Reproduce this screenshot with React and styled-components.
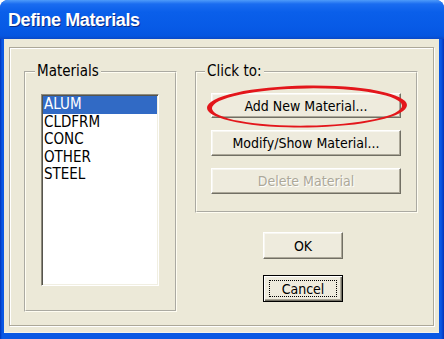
import React from 'react';
import styled, { createGlobalStyle } from 'styled-components';

const Global = createGlobalStyle`
  html, body { margin: 0; padding: 0; background: #ffffff; }
  body { width: 444px; height: 339px; overflow: hidden; }
  #root { width: 444px; height: 339px; }
`;

const UI = `"DejaVu Sans Condensed", "DejaVu Sans", sans-serif`;

const Window = styled.div`
  width: 444px;
  height: 339px;
  box-sizing: border-box;
  display: flex;
  flex-direction: column;
  border-radius: 8px 8px 0 0;
  overflow: hidden;
  background: #0A50DA;
`;

const TitleBar = styled.div`
  flex: none;
  height: 39px;
  box-sizing: border-box;
  display: flex;
  align-items: center;
  padding: 2px 0 0 8px;
  background: linear-gradient(
    to bottom,
    #4E9BFA 0px,
    #1A6CF0 4px,
    #0A5FEA 12px,
    #075AE6 28px,
    #0556E0 36px,
    #0A48C6 39px
  );
`;

const Title = styled.span`
  font-family: "Liberation Sans", Arial, sans-serif;
  font-weight: bold;
  font-size: 18px;
  letter-spacing: -0.4px;
  color: #ffffff;
  text-shadow: 1px 1px 0 #0B2C86;
`;

const Frame = styled.div`
  flex: 1;
  display: flex;
  padding: 0 5px 6px 4px;
  background: linear-gradient(to right, #0033B8 0px, #0A58E4 2px, #0A58E4 calc(100% - 3px), #0033B8 100%);
`;

const Client = styled.div`
  flex: 1;
  display: flex;
  background: #ECE9D8;
  padding: 8px 5px 7px 5px;
  box-shadow: inset 0 -1px 0 #F4F2EA;
`;

const Panel = styled.div`
  flex: 1;
  display: flex;
  align-items: flex-start;
  gap: 18px;
  padding: 15px 0 0 14px;
  border: 1px solid #ACA899;
  box-shadow: inset 1px 1px 0 #ffffff, 1px 1px 0 #ffffff;
`;

const Group = styled.fieldset`
  margin: 0;
  padding: 0;
  min-width: 0;
  width: ${(p) => p.$w}px;
  height: ${(p) => p.$h}px;
  box-sizing: border-box;
  border: 2px groove #FFFDF2;
`;

const GroupBody = styled.div`
  display: flex;
  flex-direction: column;
  align-items: flex-start;
  padding: ${(p) => p.$pad};
`;

const Legend = styled.legend`
  margin-left: ${(p) => p.$ml}px;
  padding: 0 2px;
  font-family: ${UI};
  font-size: 15px;
  line-height: 17px;
  color: #000;
`;

const List = styled.ul`
  list-style: none;
  margin: 0;
  padding: 1px;
  width: 118px;
  height: 192px;
  box-sizing: border-box;
  background: #ffffff;
  border: 1px solid;
  border-color: #8E8B7D #FFFFFF #FFFFFF #8E8B7D;
  box-shadow: inset 1px 1px 0 #55544C, inset -1px -1px 0 #F1EFE2;
`;

const Item = styled.li`
  height: 17.5px;
  line-height: 17.5px;
  padding-left: 1px;
  font-family: ${UI};
  font-size: 15px;
  color: ${(p) => (p.$selected ? '#ffffff' : '#000000')};
  background: ${(p) => (p.$selected ? '#316AC5' : 'transparent')};
`;

const RightColumn = styled.div`
  display: flex;
  flex-direction: column;
  align-items: flex-start;
`;

const ButtonStack = styled.div`
  display: flex;
  flex-direction: column;
  gap: ${(p) => p.$gap}px;
  margin: ${(p) => p.$m};
`;

const Marked = styled.div`
  position: relative;
`;

const Button = styled.button`
  position: relative;
  width: ${(p) => p.$w}px;
  height: ${(p) => p.$h}px;
  margin: 0;
  padding: 0;
  box-sizing: border-box;
  font-family: ${UI};
  font-size: 14px;
  color: ${(p) => (p.disabled ? '#ACA899' : '#000000')};
  text-shadow: ${(p) => (p.disabled ? '1px 1px 0 #ffffff' : 'none')};
  background: #EEEBDD;
  border: 1px solid;
  border-color: ${(p) => (p.$default ? '#000000' : '#FFFFFF #716F64 #716F64 #FFFFFF')};
  box-shadow: ${(p) =>
    p.$default
      ? 'inset 1px 1px 0 #ffffff, inset -1px -1px 0 #716F64, inset -2px -2px 0 #ACA899'
      : 'inset -1px -1px 0 #ACA899, inset 1px 1px 0 #F7F6F0'};
  &::after {
    content: '';
    display: ${(p) => (p.$default ? 'block' : 'none')};
    position: absolute;
    left: 5px;
    right: 5px;
    top: 4px;
    bottom: 4px;
    border: 1px dotted #000000;
  }
`;

const Highlight = styled.svg`
  position: absolute;
  left: -5px;
  top: -8px;
  width: 202px;
  height: 43px;
  pointer-events: none;
  overflow: visible;
`;

const materials = ['ALUM', 'CLDFRM', 'CONC', 'OTHER', 'STEEL'];

export default function App() {
  return (
    <>
      <Global />
      <Window>
        <TitleBar>
          <Title>Define Materials</Title>
        </TitleBar>
        <Frame>
          <Client>
            <Panel>
              <Group $w={153} $h={249}>
                <Legend $ml={9}>Materials</Legend>
                <GroupBody $pad="14px 0 0 15px">
                  <List>
                    {materials.map((m, i) => (
                      <Item key={m} $selected={i === 0}>
                        {m}
                      </Item>
                    ))}
                  </List>
                </GroupBody>
              </Group>
              <RightColumn>
                <Group $w={223} $h={150}>
                  <Legend $ml={8}>Click to:</Legend>
                  <GroupBody $pad="13px 0 0 14px">
                    <ButtonStack $gap={12} $m="0">
                      <Marked>
                        <Button $w={190} $h={25}>Add New Material...</Button>
                        <Highlight viewBox="0 0 202 43">
                          <g transform="rotate(-0.8 101 21.5)">
                            <path
                              fillRule="evenodd"
                              fill="#E3161B"
                              d="M1 21.5 A100 21 0 1 0 201 21.5 A100 21 0 1 0 1 21.5 Z M6 22 A95 18.6 0 1 0 196 22 A95 18.6 0 1 0 6 22 Z"
                            />
                          </g>
                        </Highlight>
                      </Marked>
                      <Button $w={190} $h={26}>Modify/Show Material...</Button>
                      <Button $w={190} $h={26} disabled>
                        Delete Material
                      </Button>
                    </ButtonStack>
                  </GroupBody>
                </Group>
                <ButtonStack $gap={16} $m="19px 0 0 68px">
                  <Button $w={80} $h={27}>OK</Button>
                  <Button $w={80} $h={27} $default>
                    Cancel
                  </Button>
                </ButtonStack>
              </RightColumn>
            </Panel>
          </Client>
        </Frame>
      </Window>
    </>
  );
}
